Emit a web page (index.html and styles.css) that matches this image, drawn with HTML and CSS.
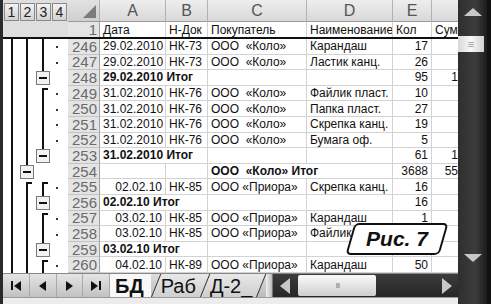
FILE: index.html
```html
<!DOCTYPE html>
<html lang="ru">
<head>
    <meta charset="UTF-8">
    <title>Рис. 7 - Структура листа БД</title>
    <link rel="stylesheet" href="styles.css">
</head>
<body>
    <div class="window">
        <div class="left">
            <div class="sheet">
                <div class="head">
                    <div class="levels">
                        <span class="lvl">1</span><span class="lvl">2</span><span class="lvl">3</span><span class="lvl">4</span>
                    </div>
                    <div class="head-rows">
                        <div class="row colhdr">
                            <div class="corner"></div>
                            <div>A</div><div>B</div><div>C</div><div>D</div><div>E</div><div></div>
                        </div>
                        <div class="row fields">
                            <div class="rh">1</div>
                            <div>Дата</div><div>Н-Док</div><div>Покупатель</div><div>Наименование</div><div>Кол</div><div>Сум</div>
                        </div>
                    </div>
                </div>

                <div class="body">
                    <!-- outline bars, one row = 15.6 -->
                    <svg class="outline" width="65" height="234" viewBox="0 0 65 234">
                        <g stroke="#111" stroke-width="2" fill="none">
                            <line x1="9" y1="0" x2="9" y2="234"/>
                            <line x1="24" y1="0" x2="24" y2="126"/>
                            <polyline points="29,144 24,144 24,234"/>
                            <line x1="40" y1="0" x2="40" y2="33"/>
                            <polyline points="45,50 40,50 40,111"/>
                            <polyline points="45,144 40,144 40,157"/>
                            <polyline points="45,175 40,175 40,204"/>
                            <polyline points="45,222 40,222 40,234"/>
                        </g>
                        <g fill="#f2f2f2" stroke="#7a7a7a" stroke-width="1">
                            <rect x="17.5" y="126.5" width="13" height="13"/>
                            <rect x="33.5" y="32.5" width="13" height="13"/>
                            <rect x="33.5" y="110.5" width="13" height="13"/>
                            <rect x="33.5" y="157.5" width="13" height="13"/>
                            <rect x="33.5" y="204.5" width="13" height="13"/>
                        </g>
                        <g fill="#111">
                            <rect x="20" y="132" width="8" height="2"/>
                            <rect x="36" y="38" width="8" height="2"/>
                            <rect x="36" y="116" width="8" height="2"/>
                            <rect x="36" y="163" width="8" height="2"/>
                            <rect x="36" y="210" width="8" height="2"/>
                        </g>
                        <g fill="#333">
                            <rect x="53" y="7" width="2" height="2"/>
                            <rect x="53" y="23" width="2" height="2"/>
                            <rect x="53" y="54" width="2" height="2"/>
                            <rect x="53" y="70" width="2" height="2"/>
                            <rect x="53" y="85" width="2" height="2"/>
                            <rect x="53" y="101" width="2" height="2"/>
                            <rect x="53" y="148" width="2" height="2"/>
                            <rect x="53" y="179" width="2" height="2"/>
                            <rect x="53" y="195" width="2" height="2"/>
                            <rect x="53" y="226" width="2" height="2"/>
                        </g>
                    </svg>

                    <div class="rows">
                        <div class="row"><div class="rh">246</div><div>29.02.2010</div><div>НК-73</div><div>ООО&nbsp; «Коло»</div><div>Карандаш</div><div class="num">17</div><div class="num"></div></div>
                        <div class="row"><div class="rh">247</div><div>29.02.2010</div><div>НК-73</div><div>ООО&nbsp; «Коло»</div><div>Ластик канц.</div><div class="num">26</div><div class="num"></div></div>
                        <div class="row"><div class="rh">248</div><div class="span2 total">29.02.2010 Итог</div><div></div><div></div><div class="num">95</div><div class="num">1436</div></div>
                        <div class="row"><div class="rh">249</div><div>31.02.2010</div><div>НК-76</div><div>ООО&nbsp; «Коло»</div><div>Файлик пласт.</div><div class="num">10</div><div class="num"></div></div>
                        <div class="row"><div class="rh">250</div><div>31.02.2010</div><div>НК-76</div><div>ООО&nbsp; «Коло»</div><div>Папка пласт.</div><div class="num">27</div><div class="num"></div></div>
                        <div class="row"><div class="rh">251</div><div>31.02.2010</div><div>НК-76</div><div>ООО&nbsp; «Коло»</div><div>Скрепка канц.</div><div class="num">19</div><div class="num"></div></div>
                        <div class="row"><div class="rh">252</div><div>31.02.2010</div><div>НК-76</div><div>ООО&nbsp; «Коло»</div><div>Бумага оф.</div><div class="num">5</div><div class="num"></div></div>
                        <div class="row"><div class="rh">253</div><div class="span2 total">31.02.2010 Итог</div><div></div><div></div><div class="num">61</div><div class="num">1049</div></div>
                        <div class="row"><div class="rh">254</div><div></div><div></div><div class="span2 total">ООО&nbsp; «Коло» Итог</div><div class="num">3688</div><div class="num">55310</div></div>
                        <div class="row"><div class="rh">255</div><div class="num">02.02.10</div><div>НК-85</div><div>ООО «Приора»</div><div>Скрепка канц.</div><div class="num">16</div><div class="num"></div></div>
                        <div class="row"><div class="rh">256</div><div class="span2 total">02.02.10 Итог</div><div></div><div></div><div class="num">16</div><div class="num"></div></div>
                        <div class="row"><div class="rh">257</div><div class="num">03.02.10</div><div>НК-85</div><div>ООО «Приора»</div><div>Карандаш</div><div class="num">1</div><div class="num"></div></div>
                        <div class="row"><div class="rh">258</div><div class="num">03.02.10</div><div>НК-85</div><div>ООО «Приора»</div><div>Файлик пласт.</div><div class="num">4</div><div class="num"></div></div>
                        <div class="row"><div class="rh">259</div><div class="span2 total">03.02.10 Итог</div><div></div><div></div><div class="num">5</div><div class="num"></div></div>
                        <div class="row"><div class="rh">260</div><div class="num">04.02.10</div><div>НК-89</div><div>ООО «Приора»</div><div>Карандаш</div><div class="num">50</div><div class="num"></div></div>
                    </div>
                </div>
            </div>

            <div class="tabbar">
                <div class="nav">
                    <span class="nb"><i class="bar"></i><i class="tri-l"></i></span>
                    <span class="nb"><i class="tri-l"></i></span>
                    <span class="nb"><i class="tri-r"></i></span>
                    <span class="nb"><i class="tri-r"></i><i class="bar"></i></span>
                </div>
                <div class="tab active">БД</div>
                <div class="tab">Раб</div>
                <div class="tab">Д-2_</div>
                <div class="tab last"></div>
                <div class="splitter"></div>
                <div class="hscroll">
                    <span class="harrow"><i class="tri-l light"></i></span>
                    <span class="hthumb">III</span>
                    <span class="htrack"></span>
                    <span class="harrow"><i class="tri-r light"></i></span>
                </div>
            </div>
            <div class="status"></div>
        </div>

        <div class="vscroll">
            <span class="varrow"><i class="tri-u"></i></span>
            <span class="vthumb">≡</span>
            <span class="vtrack"></span>
            <span class="varrow"><i class="tri-d"></i></span>
            <span class="vcorner"></span>
        </div>

        <div class="caption"><span>Рис. 7</span></div>
    </div>
</body>
</html>
```

FILE: styles.css
```css
body {
    margin: 0;
    padding: 0;
    font-family: "Liberation Sans", Arial, sans-serif;
    background: #fff;
    color: #111;
    overflow: hidden;
}

.window {
    width: 491px;
    height: 304px;
    display: flex;
    border-left: 3px solid #2a2a2a;
    box-sizing: border-box;
    position: relative;
}

.left {
    width: 455px;
    display: flex;
    flex-direction: column;
}

.sheet {
    height: 273px;
    flex: none;
    overflow: hidden;
    background: #fff;
}

/* header: level buttons + column letters + field names */
.head {
    display: flex;
    border-bottom: 2px solid #111;
}

.levels {
    width: 65px;
    flex: none;
    background: #dedede;
    display: flex;
    align-items: flex-start;
    padding: 3px 0 0 0;
    box-sizing: border-box;
}

.lvl {
    width: 14px;
    height: 16px;
    margin-right: 1px;
    border: 1px solid #8a8a8a;
    background: linear-gradient(#f2f2f2, #d2d2d2);
    font-size: 14px;
    line-height: 16px;
    text-align: center;
    color: #222;
    box-sizing: content-box;
}

.lvl:first-child {
    margin-left: 1px;
}

.row {
    display: grid;
    grid-template-columns: 32px 66px 42px 99px 86px 39px 50px;
    width: 414px;
    min-height: 0;
}

.row > div {
    border-right: 1px solid #d2d2d2;
    border-bottom: 1px solid #d2d2d2;
    box-sizing: border-box;
    font-size: 12px;
    line-height: 14px;
    padding: 0 3px;
    white-space: nowrap;
    overflow: hidden;
    display: flex;
    align-items: center;
    min-height: 0;
}

.colhdr {
    height: 22px;
}

.colhdr > div {
    background: linear-gradient(#eeeeee, #d8d8d8);
    border-right: 1px solid #b2b2b2;
    border-bottom: 1px solid #9a9a9a;
    justify-content: center;
    font-size: 16px;
    line-height: 18px;
    color: #555;
}

.colhdr .corner {
    background: linear-gradient(#e2e2e2, #cfcfcf);
    position: relative;
}

.corner::after {
    content: '';
    position: absolute;
    right: 3px;
    bottom: 3px;
    border-left: 13px solid transparent;
    border-bottom: 13px solid #7c7c7c;
}

.fields {
    height: 15px;
}

.fields > div {
    border-bottom: none;
}

.row > .rh {
    background: #e4e4e4;
    color: #6a6a6a;
    font-size: 15px;
    line-height: 15px;
    justify-content: flex-end;
    border-right: 1px solid #a0a0a0;
    border-bottom: 1px solid #c4c4c4;
    padding: 0 2px 0 0;
    overflow: visible;
}

.fields > .rh {
    border-bottom: none;
}

.body {
    display: flex;
    height: 234px;
}

.outline {
    flex: none;
    display: block;
}

.rows {
    height: 234px;
    display: grid;
    grid-template-rows: repeat(15, minmax(0, 1fr));
}

.row > .num {
    justify-content: flex-end;
}

.row > .total {
    font-weight: bold;
    grid-column: span 2;
}

/* sheet tabs */
.tabbar {
    height: 24px;
    flex: none;
    display: flex;
    background: linear-gradient(#dcdcdc, #bdbdbd);
    border-top: 1px solid #888;
    box-sizing: border-box;
}

.nav {
    width: 107px;
    display: flex;
    flex: none;
}

.nb {
    flex: 1;
    display: flex;
    align-items: center;
    justify-content: center;
    border-right: 1px solid #a8a8a8;
    background: linear-gradient(#e4e4e4, #c2c2c2);
}

.nb i {
    display: block;
}

.bar {
    width: 2px;
    height: 9px;
    background: #111;
    margin: 0 1px;
}

.tri-l {
    border-top: 5px solid transparent;
    border-bottom: 5px solid transparent;
    border-right: 7px solid #111;
}

.tri-r {
    border-top: 5px solid transparent;
    border-bottom: 5px solid transparent;
    border-left: 7px solid #111;
}

.tab {
    font-size: 20px;
    line-height: 24px;
    height: 23px;
    padding: 0 4px 0 10px;
    position: relative;
    color: #111;
    z-index: 0;
}

.tab::before {
    content: '';
    position: absolute;
    top: 0;
    bottom: 0;
    left: 0;
    right: 0;
    border-left: 1px solid #333;
    transform: skewX(-22deg);
    transform-origin: bottom left;
    background: linear-gradient(#e8e8e8, #cfcfcf);
    z-index: -1;
}

.tab.active {
    font-weight: bold;
    padding: 0 7px 0 5px;
    background: #f8f8f8;
}

.tab.active::before {
    display: none;
}

.tab.last {
    width: 6px;
    padding: 0;
}

.tab.last::before {
    background: none;
}

.splitter {
    width: 6px;
    flex: none;
    margin-left: 4px;
    background: linear-gradient(90deg, #f0f0f0, #bbb);
    border-right: 1px solid #777;
}

.hscroll {
    flex: 1;
    display: flex;
    background: linear-gradient(#3c3c3c, #262626);
    padding: 1px 0;
    box-sizing: border-box;
}

.harrow {
    width: 23px;
    display: flex;
    align-items: center;
    justify-content: center;
}

.tri-l.light {
    border-right-color: #c8c8c8;
    border-top-width: 8px;
    border-bottom-width: 8px;
    border-right-width: 10px;
}

.tri-r.light {
    border-left-color: #c8c8c8;
    border-top-width: 8px;
    border-bottom-width: 8px;
    border-left-width: 10px;
}

.hthumb {
    width: 78px;
    margin-left: 2px;
    background: linear-gradient(#fafafa, #cfcfcf);
    border-radius: 2px;
    font-size: 8px;
    color: #888;
    display: flex;
    align-items: center;
    justify-content: center;
    letter-spacing: -1px;
}

.htrack {
    flex: 1;
}

.status {
    flex: 1;
    background: #ececec;
    border-top: 1px solid #9a9a9a;
}

/* vertical scrollbar */
.vscroll {
    width: 33px;
    display: flex;
    flex-direction: column;
    background: linear-gradient(90deg, #2e2e2e, #3d3d3d 60%, #1c1c1c);
    border-right: 4px solid #111;
    box-sizing: border-box;
}

.varrow {
    height: 24px;
    display: flex;
    align-items: center;
    justify-content: center;
}

.tri-u {
    border-left: 9px solid transparent;
    border-right: 9px solid transparent;
    border-bottom: 8px solid #c8c8c8;
}

.tri-d {
    border-left: 9px solid transparent;
    border-right: 9px solid transparent;
    border-top: 8px solid #c8c8c8;
}

.vthumb {
    height: 16px;
    margin: 12px 3px 0 0;
    background: linear-gradient(90deg, #d8d8d8, #f8f8f8 50%, #d0d0d0);
    font-size: 11px;
    line-height: 16px;
    color: #999;
    text-align: center;
}

.vtrack {
    flex: 1;
}

.vcorner {
    height: 34px;
}

/* figure label */
.caption {
    position: absolute;
    left: 347px;
    top: 223px;
    width: 94px;
    height: 32px;
    display: flex;
    align-items: center;
    justify-content: center;
    z-index: 2;
}

.caption::before {
    content: '';
    position: absolute;
    top: 0;
    bottom: 0;
    left: 0;
    right: 0;
    background: #fff;
    border: 2px solid #111;
    border-radius: 5px;
    transform: skewX(-16deg);
}

.caption span {
    position: relative;
    font-size: 21px;
    font-weight: bold;
    font-style: italic;
}
```
